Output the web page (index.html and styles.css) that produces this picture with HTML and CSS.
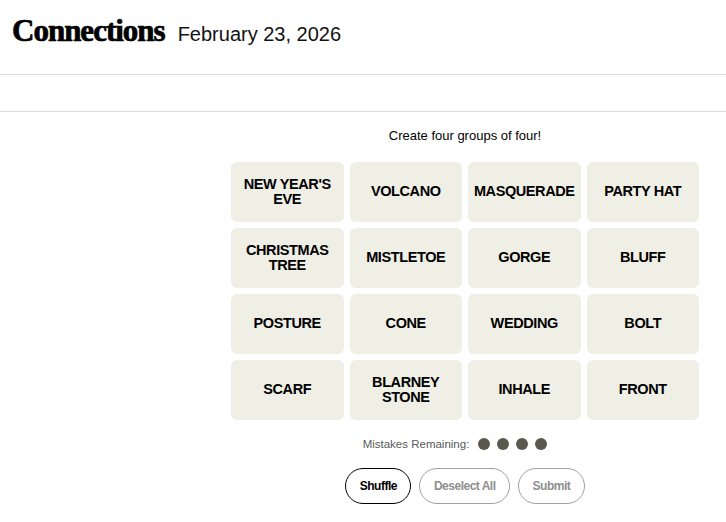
FILE: index.html
```html
<!DOCTYPE html>
<html>
<head>
<meta charset="utf-8">
<link rel="stylesheet" href="styles.css">
</head>
<body>
<header class="header">
  <h1 class="title">Connections</h1>
  <span class="date">February 23, 2026</span>
</header>
<div class="toolbar"></div>
<main class="game">
  <p class="prompt">Create four groups of four!</p>
  <div class="board">
    <div class="tile">NEW YEAR'S<br>EVE</div>
    <div class="tile">VOLCANO</div>
    <div class="tile">MASQUERADE</div>
    <div class="tile">PARTY HAT</div>
    <div class="tile">CHRISTMAS<br>TREE</div>
    <div class="tile">MISTLETOE</div>
    <div class="tile">GORGE</div>
    <div class="tile">BLUFF</div>
    <div class="tile">POSTURE</div>
    <div class="tile">CONE</div>
    <div class="tile">WEDDING</div>
    <div class="tile">BOLT</div>
    <div class="tile">SCARF</div>
    <div class="tile">BLARNEY<br>STONE</div>
    <div class="tile">INHALE</div>
    <div class="tile">FRONT</div>
  </div>
  <div class="mistakes">
    <span class="mistakes-label">Mistakes Remaining:</span>
    <span class="dots"><i class="dot"></i><i class="dot"></i><i class="dot"></i><i class="dot"></i></span>
  </div>
  <div class="actions">
    <button class="btn btn-active">Shuffle</button>
    <button class="btn">Deselect All</button>
    <button class="btn">Submit</button>
  </div>
</main>
</body>
</html>
```
FILE: styles.css
```css
* { box-sizing: border-box; }
html, body { margin: 0; padding: 0; background: #fff; }
body { font-family: "Liberation Sans", Arial, sans-serif; color: #000; }

.header {
  height: 75px;
  border-bottom: 1px solid #dcdcdc;
  display: flex;
  align-items: baseline;
  padding: 13px 0 0 12px;
}
.title {
  margin: 0;
  font-family: "Liberation Serif", "Times New Roman", serif;
  font-weight: bold;
  font-size: 31px;
  letter-spacing: -1px;
  line-height: 36px;
  -webkit-text-stroke: 0.7px #000;
}
.date {
  margin-left: 13px;
  font-size: 20px;
  font-weight: 300;
  color: #121212;
}
.toolbar {
  height: 37px;
  border-bottom: 1px solid #dcdcdc;
}
.game {
  width: 468px;
  margin-left: 231px;
  display: flex;
  flex-direction: column;
  align-items: center;
}
.prompt {
  margin: 15px 0 0;
  font-size: 13px;
  line-height: 18px;
  color: #000;
}
.board {
  margin-top: 17px;
  width: 468px;
  display: grid;
  grid-template-columns: repeat(4, 1fr);
  gap: 6px;
}
.tile {
  height: 60px;
  background: #efefe6;
  border-radius: 6px;
  display: flex;
  align-items: center;
  justify-content: center;
  text-align: center;
  font-weight: bold;
  font-size: 14.5px;
  letter-spacing: -0.4px;
  line-height: 15px;
  padding-bottom: 1px;
  color: #000;
}
.mistakes {
  margin-top: 18px;
  display: flex;
  align-items: center;
  margin-left: -20px;
}
.mistakes-label {
  font-size: 11.5px;
  color: #5a5a5a;
}
.dots { display: flex; gap: 7px; margin-left: 9px; }
.dot {
  width: 12px;
  height: 12px;
  border-radius: 50%;
  background: #5a594e;
}
.actions {
  margin-top: 18px;
  display: flex;
  gap: 8px;
}
.btn {
  height: 36px;
  border-radius: 18px;
  border: 1px solid #a0a0a0;
  background: #fff;
  color: #8e8e8e;
  font-family: "Liberation Sans", Arial, sans-serif;
  font-weight: bold;
  font-size: 12px;
  letter-spacing: -0.5px;
  padding: 0 13.5px;
}
.btn-active {
  border-color: #000;
  color: #000;
}
```
